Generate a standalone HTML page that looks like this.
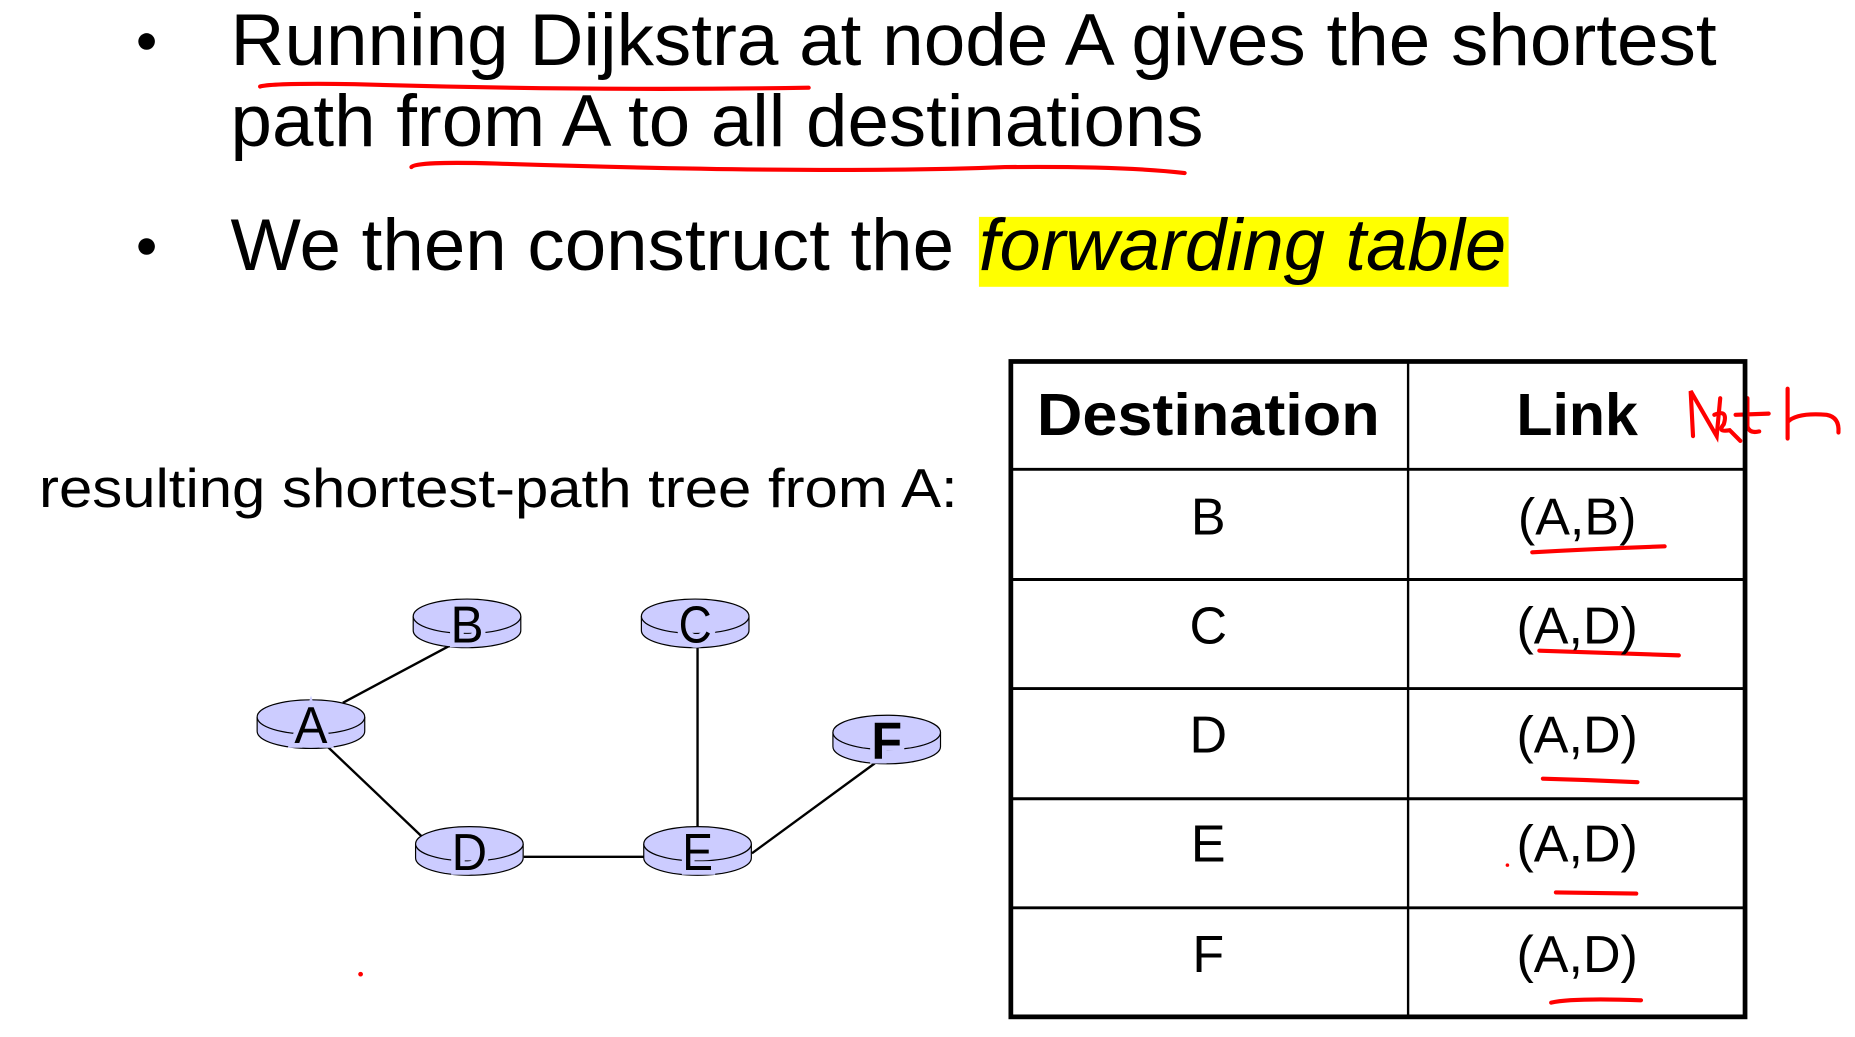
<!DOCTYPE html>
<html><head><meta charset="utf-8"><style>
html,body{margin:0;padding:0;background:#fff;overflow:hidden}
svg{display:block}
</style></head><body>
<svg width="1855" height="1037" viewBox="0 0 1569 875" preserveAspectRatio="none" xmlns="http://www.w3.org/2000/svg">
<g font-family="Liberation Sans, Arial, sans-serif" fill="#000">
<circle cx="124" cy="35" r="7"/>
<circle cx="124" cy="208" r="7"/>
<text x="195" y="55" font-size="62" textLength="1257" lengthAdjust="spacingAndGlyphs">Running Dijkstra at node A gives the shortest</text>
<text x="195" y="123" font-size="62" textLength="823" lengthAdjust="spacingAndGlyphs">path from A to all destinations</text>
<rect x="828" y="183" width="448" height="59" fill="#ffff00"/>
<text x="195" y="228" font-size="62" textLength="612" lengthAdjust="spacingAndGlyphs">We then construct the</text>
<text x="828" y="228" font-size="62" font-style="italic" textLength="446" lengthAdjust="spacingAndGlyphs">forwarding table</text>
<text x="33" y="428" font-size="46" textLength="777" lengthAdjust="spacingAndGlyphs">resulting shortest-path tree from A:</text>
</g>
<g fill="none" stroke="#f00" stroke-width="3.5" stroke-linecap="round">
<path d="M220 73 Q230 70 300 71 Q500 77 684 74"/>
<path d="M348 141 Q352 136 420 138 Q700 147 850 141 Q950 140 1002 146"/>
<path d="M1296 466 Q1350 463 1408 461"/>
<path d="M1302 549 Q1360 551 1420 553"/>
<path d="M1305 657 Q1345 658 1385 660"/>
<path d="M1316 753 L1384 754"/>
<path d="M1312 846 Q1330 842 1388 844"/>
<path d="M1432 368 L1430 330 L1452 368 L1455 336"/>
<path d="M1450 350 Q1462 345 1458 358 Q1452 365 1463 363 L1472 372"/>
<path d="M1478 336 L1478 360 Q1480 366 1488 364 M1468 350 L1496 349"/>
<path d="M1512 328 L1512 370 M1512 356 Q1520 348 1545 350 Q1556 352 1555 365"/>
</g>
<circle cx="305" cy="822" r="2" fill="#f00"/>
<circle cx="1275" cy="730" r="1.5" fill="#f00"/>
<g stroke="#000" stroke-width="2">
<line x1="290" y1="593" x2="380" y2="545"/>
<line x1="590" y1="545" x2="590" y2="697"/>
<line x1="277" y1="630" x2="357" y2="706"/>
<line x1="443" y1="723" x2="546" y2="723"/>
<line x1="636" y1="720" x2="740" y2="644"/>
</g>
<defs>
<g id="rt">
<path d="M-45 0 V12 A45 14 0 0 0 45 12 V0" fill="#ccccff" stroke="#000" stroke-width="2"/>
<ellipse rx="45" ry="14" fill="#ccccff" stroke="#000" stroke-width="2"/>
</g>
</defs>
<g font-family="Liberation Sans, Arial, sans-serif" font-size="44" text-anchor="middle" stroke="#ccccff" stroke-width="8" paint-order="stroke" fill="#000">
<g transform="translate(395,520)"><use href="#rt"/><text y="22" textLength="28" lengthAdjust="spacingAndGlyphs">B</text></g>
<g transform="translate(588,520)"><use href="#rt"/><text y="22" textLength="28" lengthAdjust="spacingAndGlyphs">C</text></g>
<g transform="translate(263,605)"><use href="#rt"/><text y="22" textLength="28" lengthAdjust="spacingAndGlyphs">A</text></g>
<g transform="translate(750,618)"><use href="#rt"/><text y="22" font-weight="bold" textLength="26" lengthAdjust="spacingAndGlyphs">F</text></g>
<g transform="translate(397,712)"><use href="#rt"/><text y="22" textLength="30" lengthAdjust="spacingAndGlyphs">D</text></g>
<g transform="translate(590,712)"><use href="#rt"/><text y="22" textLength="26" lengthAdjust="spacingAndGlyphs">E</text></g>
</g>
<g stroke="#000">
<rect x="855" y="305" width="621" height="553" fill="none" stroke-width="4"/>
<line x1="1191" y1="305" x2="1191" y2="858" stroke-width="2"/>
<line x1="855" y1="396" x2="1476" y2="396" stroke-width="2.5"/>
<line x1="855" y1="489" x2="1476" y2="489" stroke-width="2.5"/>
<line x1="855" y1="581" x2="1476" y2="581" stroke-width="2.5"/>
<line x1="855" y1="674" x2="1476" y2="674" stroke-width="2.5"/>
<line x1="855" y1="766" x2="1476" y2="766" stroke-width="2.5"/>
</g>
<g font-family="Liberation Sans, Arial, sans-serif" fill="#000" text-anchor="middle">
<text x="1022" y="367" font-size="50" font-weight="bold" textLength="290" lengthAdjust="spacingAndGlyphs">Destination</text>
<text x="1334" y="367" font-size="50" font-weight="bold">Link</text>
<g font-size="44">
<text x="1022" y="451">B</text><text x="1334" y="451">(A,B)</text>
<text x="1022" y="543">C</text><text x="1334" y="543">(A,D)</text>
<text x="1022" y="635">D</text><text x="1334" y="635">(A,D)</text>
<text x="1022" y="727">E</text><text x="1334" y="727">(A,D)</text>
<text x="1022" y="820">F</text><text x="1334" y="820">(A,D)</text>
</g>
</g>
</svg>
</body></html>
